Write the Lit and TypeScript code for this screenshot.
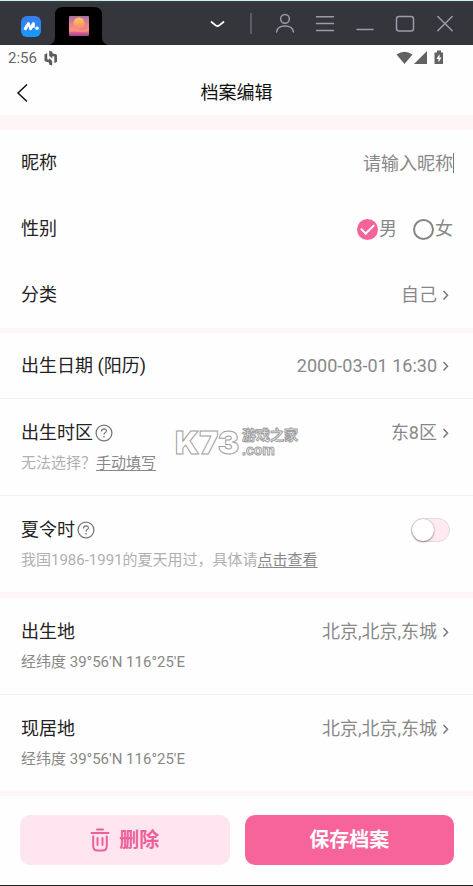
import { LitElement, html, css, svg } from "lit";
import { customElement, property, state } from "lit/decorators.js";

const chevronRight = html`<svg class="chev" width="16" height="16" viewBox="0 0 16 16" aria-hidden="true">
  <path d="M6.5 4 L10.5 8.2 L6.5 12.4" fill="none" stroke="#777" stroke-width="1.5" /></svg>`;

const strokeIcon = (body: unknown) => html`<svg width="24" height="24" viewBox="0 0 24 24" fill="none"
  stroke="#9a9cac" stroke-width="1.5" stroke-linecap="round" aria-hidden="true">${body}</svg>`;

@customElement("window-bar")
export class WindowBar extends LitElement {
  static styles = css`
    :host { display: block; background: #35363b; border-top: 1px solid #d3ecee; box-shadow: inset 0 2px 0 #323e42; }
    .bar { display: flex; height: 44px; align-items: center; justify-content: space-between; padding-right: 8px; }
    .tabs, .tools { display: flex; align-items: center; }
    .tabs { align-self: stretch; align-items: flex-end; }
    button { border: 0; padding: 0; background: none; display: flex; align-items: center; justify-content: center; height: 40px; width: 40px; }
    .home { width: 21px; height: 21px; margin: 0 7px 8px 21px; }
    .tab { width: 60px; height: 38px; }
    .sep { width: 28px; display: flex; justify-content: center; }
    .sep::before { content: ""; width: 2px; height: 21px; background: #5b5c63; }
  `;
  render() {
    return html`<div class="bar">
      <div class="tabs">
        <button class="home" aria-label="主页">
          <svg width="21" height="21" viewBox="0 0 21 21" aria-hidden="true">
            <defs><linearGradient id="b" x1="0" y1="0" x2="0" y2="1"><stop offset="0" stop-color="#3b7bea" /><stop offset="1" stop-color="#159bff" /></linearGradient></defs>
            <rect width="20" height="21" rx="6" fill="url(#b)" />
            <path d="M4.400 12.600 L7.400 7.800 M9.400 12.600 L12.400 7.800" stroke="#fff" stroke-width="3.200" stroke-linecap="round" />
            <path d="M7.500 7.600 L9.300 12.400 M12.400 7.800 L13 11" stroke="#fff" stroke-width="1.800" fill="none" stroke-linecap="round" />
            <circle cx="16" cy="12.300" r="1.800" fill="#fff" />
          </svg>
        </button>
        <button class="tab" aria-label="当前应用">
          <svg width="60" height="38" viewBox="0 0 60 38" aria-hidden="true">
            <defs><linearGradient id="s" x1="0" y1="0" x2="0" y2="1"><stop offset="0" stop-color="#a970a2" /><stop offset=".5" stop-color="#ee8590" /><stop offset=".72" stop-color="#f08080" /><stop offset="1" stop-color="#a03f98" /></linearGradient>
            <linearGradient id="m" x1="0" y1="0" x2="0" y2="1"><stop offset="0" stop-color="#ffc956" /><stop offset="1" stop-color="#f58a70" /></linearGradient></defs>
            <path d="M0 38 Q6 36 6 30 V8 Q6 0 14 0 H45 Q53 0 53 8 V31 Q53 36 59 38 Z" fill="#000" />
            <rect x="20" y="9" width="20" height="20" rx="1" fill="url(#s)" />
            <circle cx="30" cy="16" r="5.500" fill="url(#m)" />
            <path d="M20 21 Q25 19 30 22 T40 21 V24 Q35 26 30 25 T20 25 Z" fill="#ff9a80" opacity=".6" />
            <path d="M27 26 H33" stroke="#e05590" />
          </svg>
        </button>
      </div>
      <div class="tools">
        <button aria-label="展开"><svg width="24" height="24" viewBox="0 0 24 24" fill="none" stroke="#fff" stroke-width="1.800" stroke-linecap="round" aria-hidden="true"><path d="M6.500 11 L11 14.600 Q12.500 15.600 14 14.600 L18.500 11" /></svg></button>
        <span class="sep"></span>
        <button aria-label="用户">${strokeIcon(svg`<circle cx="12" cy="7.800" r="4.400" /><path d="M3.500 21 Q4.500 15 12 15 Q19.500 15 20.500 21" />`)}</button>
        <button aria-label="菜单">${strokeIcon(svg`<path d="M3.500 5.800 H20.500 M3.500 12.500 H20.500 M3.500 19.500 H20.500" />`)}</button>
        <button aria-label="最小化">${strokeIcon(svg`<path d="M4 18.500 H20" />`)}</button>
        <button aria-label="最大化">${strokeIcon(svg`<rect x="3.500" y="5.500" width="17" height="14.500" rx="2.500" />`)}</button>
        <button aria-label="关闭">${strokeIcon(svg`<path d="M4.800 5.500 L19.200 19.800 M19.200 5.500 L4.800 19.800" />`)}</button>
      </div>
    </div>`;
  }
}

@customElement("status-bar")
export class StatusBar extends LitElement {
  static styles = css`
    :host { display: flex; height: 26px; align-items: center; padding: 0 29px 0 8px; color: #666; font-size: 15px; gap: 7px; }
    .right { margin-left: auto; }
  `;
  render() {
    return html`<span>2:56</span>
      <svg width="14" height="16" viewBox="0 0 14 16" fill="#5c5c5c" aria-hidden="true">
        <path d="M0.500 4.500 L3.200 3 V9.300 L5 9.700 V8 L8.200 11 V15.500 L5 14.500 V12.600 L1.500 11.600 Q0.500 11.200 0.500 10 Z" />
        <path d="M13 11.800 L10.300 13.300 V6.500 L8.400 6 V8.600 L5.200 6 V0.500 L8.400 1.800 V3.200 L12 4.200 Q13 4.600 13 5.800 Z" />
      </svg>
      <svg class="right" width="48" height="16" viewBox="0 0 48 16" fill="#626262" aria-hidden="true">
        <path d="M0.500 4.500 Q8.500 -1 16.500 4.500 L8.500 14 Z" />
        <path d="M31 1 V14 H18 Z" />
        <path d="M38.500 2.500 H41 V0.500 H45 V2.500 H47 V14 H38.500 Z" />
        <path d="M43.500 4 L40.500 9 H42.500 V12.500 L45.500 7.500 H43.500 Z" fill="#fff" />
      </svg>`;
  }
}

@customElement("help-button")
export class HelpButton extends LitElement {
  static styles = css`
    :host { display: flex; }
    button { border: 0; padding: 0; background: none; display: flex; }
  `;
  render() {
    return html`<button aria-label="帮助"><svg width="18" height="18" viewBox="0 0 18 18" fill="none" stroke="#777" aria-hidden="true">
      <circle cx="9" cy="9" r="7.900" stroke-width="1.300" />
      <path d="M6.500 7.400 Q6.600 4.800 9 4.800 Q11.500 4.900 11.400 7 Q11.300 8.100 10 8.800 Q9 9.400 9 10.800" stroke-width="1.200" />
      <path d="M9 12 V13.400" stroke-width="1.300" /></svg></button>`;
  }
}

/* A form line: label on the left, value on the right, optional note underneath. */
@customElement("form-row")
export class FormRow extends LitElement {
  @property() label = "";
  @property() value = "";
  @property({ type: Boolean }) help = false;
  static styles = css`
    :host { display: block; padding: 20px 20px 20px 21px; color: #222; }
    :host([compact]) { padding-bottom: 19px; }
    :host([noted]) { padding-top: 21px; padding-bottom: 21px; }
    .line { display: flex; align-items: center; justify-content: space-between; min-height: 26px; }
    .label { display: flex; align-items: center; gap: 2px; font-size: 18px; line-height: 26px; }
    .value { font: inherit; font-size: 18px; line-height: 26px; color: #888; background: none; border: 0; padding: 0; display: flex; align-items: center; }
    .note { font-size: 15px; line-height: 22px; }
    :host([noted]) .note { margin-top: 6px; }
  `;
  render() {
    return html`<div class="line">
        <span class="label"><span>${this.label}</span>${this.help ? html`<help-button></help-button>` : ""}</span>
        ${this.value
          ? html`<button class="value" aria-label=${this.label + " " + this.value}>${this.value}${chevronRight}</button>`
          : html`<slot></slot>`}
      </div>
      <div class="note"><slot name="note"></slot></div>`;
  }
}

@customElement("app-root")
export class AppRoot extends LitElement {
  @state() private gender = "m";
  static styles = css`
    * { box-sizing: border-box; }
    :host { display: flex; flex-direction: column; position: relative; box-sizing: border-box; min-height: 100vh; background: #fefefe; border-bottom: 1px solid #222;
      font-family: Roboto, "Noto Sans CJK SC", sans-serif; color: #222; }
    button, input { font: inherit; }
    .head { display: grid; grid-template-columns: 48px 1fr 48px; height: 44px; align-items: center; }
    .head h1 { margin: 0; font-size: 18px; line-height: 26px; font-weight: 400; text-align: center; color: #111; }
    .back { border: 0; background: none; padding: 0 0 0 14px; display: flex; }
    .group { border-top: 5px solid #fff5f7; }
    .group.first { border-top-width: 15px; }
    .group.places { border-top-width: 6px; }
    .group.split form-row + form-row { border-top: 1px solid #f0f0f0; }
    .nick { display: flex; align-items: center; }
    .nick input { border: 0; outline: 0; padding: 0; width: 200px; height: 26px; font-size: 18px; text-align: right; background: none; color: #222; }
    .nick input::placeholder { color: #888; opacity: 1; }
    .caret { width: 1px; height: 20px; background: #777; margin-right: -1px; }
    .sexes { display: flex; gap: 16px; border: 0; margin: 0; padding: 0; }
    .sexes label { display: flex; align-items: center; gap: 1px; font-size: 18px; line-height: 26px; color: #888; }
    .sexes input { appearance: none; margin: 0; width: 21px; height: 21px; border: 2px solid #858585; border-radius: 50%; }
    .sexes input:checked { border: 0; background: #f4639a; display: grid; place-items: center; }
    .sexes input:checked::before { content: ""; width: 11px; height: 6px; border: solid #fff; border-width: 0 0 2px 2px; transform: rotate(-45deg) translate(1px, -1px); }
    .switch { appearance: none; margin: 0 3px 0 0; width: 39px; height: 24px; border-radius: 12px; background: #ffeaf1; border: 1px solid #e6dadd; display: flex; align-items: center; }
    .switch::before { content: ""; width: 22px; height: 22px; border-radius: 50%; background: #fff; box-shadow: 0 1px 2px #0006, 0 0 1px #0005; }
    .switch:checked { justify-content: flex-end; background: #f4639a; }
    .muted { color: #b0b0b0; }
    .coords { color: #888; }
    a { color: #888; text-underline-offset: 2px; }
    .foot { border-top: 5px solid #fff5f7; display: grid; grid-template-columns: 1fr 1fr; gap: 15px; padding: 19px 19px 20px 20px; }
    .foot button { height: 50px; border: 0; border-radius: 10px; font-size: 20px; line-height: 28px; padding: 0; font-weight: 700; display: flex; align-items: center; justify-content: center; gap: 9px; }
    .del { background: #fee5ef; color: #ed6199; }
    .save { background: #f6649a; color: #fff; }
    .mark { position: absolute; top: 50%; left: 50%; transform: translate(-50%, -50%); display: flex; align-items: center; gap: 3px; color: #fff; white-space: nowrap; pointer-events: none;
      -webkit-text-stroke: 1px #a0a0a0; font-weight: 700; }
    .mark .big { font-family: Inter, sans-serif; font-weight: 900; font-size: 32px; line-height: 32px; }
    .mark .small { display: flex; flex-direction: column; font-size: 14px; line-height: 15px; }
    .mark .com { font-family: "Liberation Sans", sans-serif; }
  `;
  render() {
    return html`
      <window-bar></window-bar>
      <status-bar></status-bar>
      <header class="head">
        <button class="back" aria-label="返回"><svg width="16" height="20" viewBox="0 0 16 20" fill="none" stroke="#111" stroke-width="1.500" aria-hidden="true"><path d="M13 1.500 L4 10 L13 18.500" /></svg></button>
        <h1>档案编辑</h1>
      </header>
      <main>
        <section class="group first">
          <form-row label="昵称"><span class="nick"><input aria-label="昵称" placeholder="请输入昵称" /><span class="caret"></span></span></form-row>
          <form-row label="性别"><fieldset class="sexes" aria-label="性别">
            <label><input type="radio" name="sex" .checked=${this.gender === "m"} @change=${() => (this.gender = "m")} />男</label>
            <label><input type="radio" name="sex" .checked=${this.gender === "f"} @change=${() => (this.gender = "f")} />女</label>
          </fieldset></form-row>
          <form-row label="分类" value="自己"></form-row>
        </section>
        <section class="group split">
          <form-row compact label="出生日期 (阳历)" value="2000-03-01 16:30"></form-row>
          <form-row noted help label="出生时区" value="东8区"><span slot="note" class="muted">无法选择？<a href="#manual">手动填写</a></span></form-row>
          <form-row noted help label="夏令时"><input class="switch" type="checkbox" role="switch" aria-label="夏令时" /><span slot="note" class="muted">我国1986-1991的夏天用过，具体请<a href="#dst">点击查看</a></span></form-row>
        </section>
        <section class="group split places">
          <form-row noted label="出生地" value="北京,北京,东城"><span slot="note" class="coords">经纬度 39°56'N 116°25'E</span></form-row>
          <form-row noted label="现居地" value="北京,北京,东城"><span slot="note" class="coords">经纬度 39°56'N 116°25'E</span></form-row>
        </section>
      </main>
      <footer class="foot">
        <button class="del"><svg width="20" height="24" viewBox="0 0 20 24" fill="none" stroke="#ed6199" stroke-width="2" stroke-linecap="round" aria-hidden="true"><path d="M1.500 5 H18.500 M7 1.500 H13 M3.200 8.500 V18 Q3.200 22.500 7.500 22.500 H12.500 Q16.800 22.500 16.800 18 V8.500 M7.500 10 V17 M12.500 10 V17" /></svg>删除</button>
        <button class="save">保存档案</button>
      </footer>
      <div class="mark"><span class="big">K73</span><span class="small"><span>游戏之家</span><span class="com">.com</span></span></div>`;
  }
}
